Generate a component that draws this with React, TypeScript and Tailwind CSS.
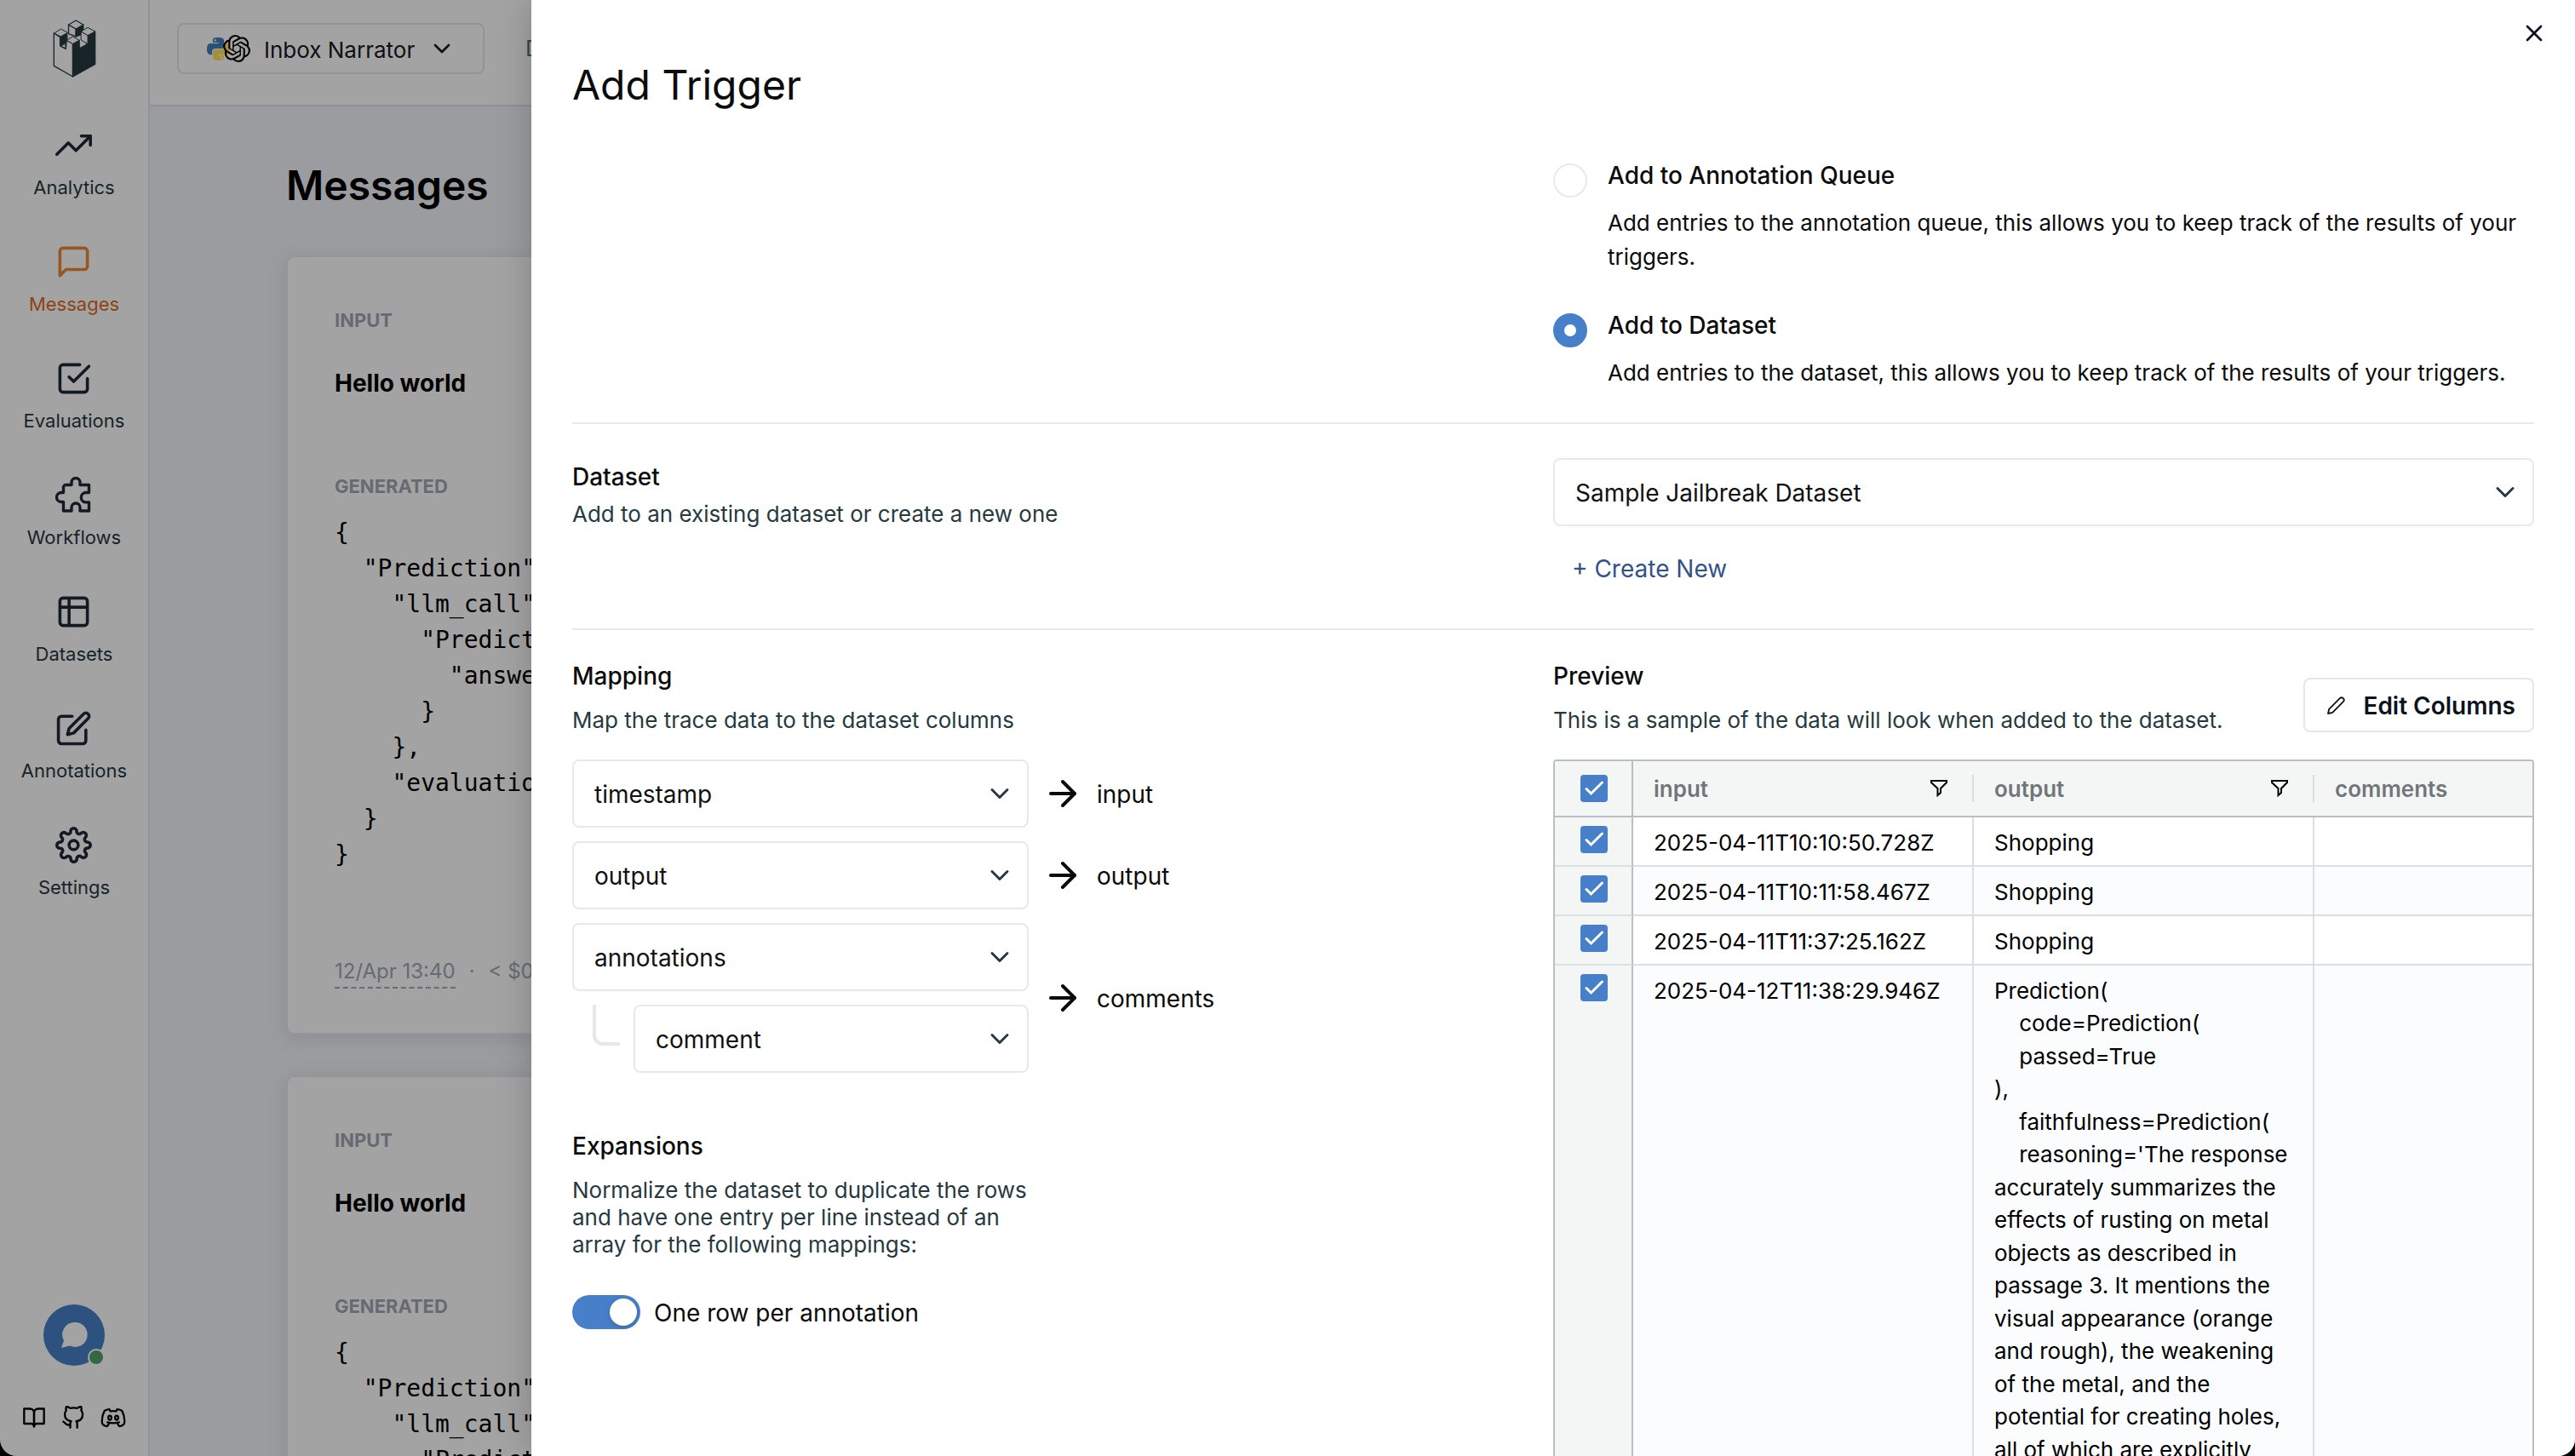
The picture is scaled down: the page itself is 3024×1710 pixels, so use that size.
import React from "react";
import {
  FiTrendingUp,
  FiMessageSquare,
  FiCheckSquare,
  FiEdit,
  FiSettings,
  FiBookOpen,
  FiGithub,
} from "react-icons/fi";
import { SiOpenai } from "react-icons/si";
import { ArrowRight, ChevronDown, X } from "lucide-react";

function CastleLogo() {
  return (
    <svg viewBox="64 38 154 205" className="h-[68px] w-[51px]" fill="none" stroke="#27393f" strokeWidth="4" strokeLinejoin="round" aria-hidden="true">
      <path d="M120 56L146 71V98L120 88Z" fill="#fff" />
      <path d="M146 71L172 56V88L146 98Z" fill="#27393f" />
      <path d="M146 41L172 56L146 71L120 56Z" fill="#fff" />
      <path d="M68 86V202L135 240V124L113 111L110 142L90 131V100Z" fill="#fff" />
      <path d="M135 124L158 111V138L184 124L188 118V94L214 80V196L135 240Z" fill="#27393f" />
      <path d="M164 80L188 94V124L164 110Z" fill="#fff" strokeWidth="3" />
      <path d="M188 66L214 80L188 94L164 80Z" fill="#fff" strokeWidth="3" />
      <path d="M161 113L183 125L161 137Z" fill="#fff" stroke="none" />
      <path d="M92 99L115 86V108L109 122L92 131Z" fill="#27393f" strokeWidth="3" />
      <path d="M93 71L117 84L92 98L69 86Z" fill="#fff" strokeWidth="3" />
      <path d="M109 123V140L93 131Z" fill="#fff" strokeWidth="3" />
      <path d="M135 98L158 111L135 124L113 111Z" fill="#fff" strokeWidth="3" />
    </svg>
  );
}

function PythonLogo() {
  return (
    <svg viewBox="0 0 24 24" className="size-[27px] shrink-0" aria-hidden="true">
      <path
        fill="#4280bd"
        d="M14.25.18l.9.2.73.26.59.3.45.32.34.34.25.34.16.33.1.3.04.26.02.2-.01.13V8.5l-.05.63-.13.55-.21.46-.26.38-.3.31-.33.25-.35.19-.35.14-.33.1-.3.07-.26.04-.21.02H8.77l-.69.05-.59.14-.5.22-.41.27-.33.32-.27.35-.2.36-.15.37-.1.35-.07.32-.04.27-.02.21v3.06H3.17l-.21-.03-.28-.07-.32-.12-.35-.18-.36-.26-.36-.36-.35-.46-.32-.59-.28-.73-.21-.88-.14-1.05-.05-1.23.06-1.22.16-1.04.24-.87.32-.71.36-.57.4-.44.42-.33.42-.24.4-.16.36-.1.32-.05.24-.01h.16l.06.01h8.16v-.83H6.18l-.01-2.75-.02-.37.05-.34.11-.31.17-.28.25-.26.31-.23.38-.2.44-.18.51-.15.58-.12.64-.1.71-.06.77-.04.84-.02 1.27.05zm-6.3 1.98l-.23.33-.08.41.08.41.23.34.33.22.41.09.41-.09.33-.22.23-.34.08-.41-.08-.41-.23-.33-.33-.22-.41-.09-.41.09z"
      />
      <path
        fill="#ffe05e"
        d="M21.04 6.11l.28.06.32.12.35.18.36.27.36.35.35.47.32.59.28.73.21.88.14 1.04.05 1.23-.06 1.23-.16 1.04-.24.86-.32.71-.36.57-.4.45-.42.33-.42.24-.4.16-.36.09-.32.05-.24.02-.16-.01h-8.22v.82h5.84l.01 2.76.02.36-.05.34-.11.31-.17.29-.25.25-.31.24-.38.2-.44.17-.51.15-.58.13-.64.09-.71.07-.77.04-.84.01-1.27-.04-1.07-.14-.9-.2-.73-.25-.59-.3-.45-.33-.34-.34-.25-.34-.16-.33-.1-.3-.04-.25-.02-.2.01-.13v-5.34l.05-.64.13-.54.21-.46.26-.38.3-.32.33-.24.35-.2.35-.14.33-.1.3-.06.26-.04.21-.02.13-.01h5.84l.69-.05.59-.14.5-.21.41-.28.33-.32.27-.35.2-.36.15-.36.1-.35.07-.32.04-.28.02-.21V6.07h2.09l.14.01zM14.57 20.36l-.23.33-.08.41.08.41.23.33.33.23.41.08.41-.08.33-.23.23-.33.08-.41-.08-.41-.23-.33-.33-.23-.41-.08-.41.08z"
      />
    </svg>
  );
}

function PuzzleIcon() {
  return (
    <svg viewBox="0 0 43 43" className="size-full" fill="none" stroke="currentColor" strokeWidth="3.4" strokeLinejoin="round" strokeLinecap="round" aria-hidden="true">
      <path d="M12.5 9.5H19V6.5a5 5 0 0 1 10 0V9.5H39.5V18.5H36a5.7 5.7 0 0 0 0 11.4H39.5V40H29V36a5 5 0 0 0-10 0V40H9.5V29.5H7a5.5 5.5 0 0 1 0-11H9.5V12.5a3 3 0 0 1 3-3Z" />
    </svg>
  );
}

function TableIcon() {
  return (
    <svg viewBox="0 0 24 24" className="size-full" fill="none" stroke="currentColor" strokeWidth="2" strokeLinejoin="round" aria-hidden="true">
      <rect x="3" y="3" width="18" height="18" rx="2" />
      <path d="M3 9h18M9 3v18" />
    </svg>
  );
}

function DiscordIcon() {
  return (
    <svg viewBox="0 0 24 24" className="size-[30px]" fill="none" stroke="currentColor" strokeWidth="1.8" strokeLinecap="round" strokeLinejoin="round" aria-hidden="true">
      <ellipse cx="8.8" cy="12" rx="1.5" ry="2" />
      <ellipse cx="15.2" cy="12" rx="1.5" ry="2" />
      <path d="M8 17c0 1-1.400 3-1.900 3C4.700 20 2.600 18.900 1.600 17.500c-.5-3.500.1-8 2.200-12C5.200 4.500 6.700 4.200 8.300 4l1 2c1.700-.3 3.700-.3 5.400 0l1-2c1.600.2 3.100.5 4.500 1.500 2.100 4 2.700 8.500 2.200 12-1 1.400-3.100 2.500-4.500 2.500-.5 0-1.900-2-1.900-3" />
      <path d="M6.500 16.300c3.500 1 7.500 1 11 0" />
    </svg>
  );
}

function PencilIcon() {
  return (
    <svg viewBox="0 0 24 24" className="size-[24px]" fill="none" stroke="currentColor" strokeWidth="1.8" strokeLinejoin="round" aria-hidden="true">
      <path d="M3 21l1.200-5.200L16.800 3.200a2.600 2.600 0 0 1 4 4L8.200 19.800Z" />
    </svg>
  );
}

function FilterIcon() {
  return (
    <svg viewBox="0 0 22 22" className="size-[22px]" fill="none" stroke="#000" strokeWidth="2" strokeLinejoin="miter" aria-hidden="true">
      <path d="M2 2H20V4L13 11V16L9.500 19V11L2 4Z" />
    </svg>
  );
}

const NAV = [
  { label: "Analytics", icon: <FiTrendingUp className="size-full" /> },
  { label: "Messages", icon: <FiMessageSquare className="size-full" />, active: true },
  { label: "Evaluations", icon: <FiCheckSquare className="size-full" /> },
  { label: "Workflows", icon: <PuzzleIcon /> },
  { label: "Datasets", icon: <TableIcon /> },
  { label: "Annotations", icon: <FiEdit className="size-full" /> },
  { label: "Settings", icon: <FiSettings className="size-full" /> },
];

function Sidebar() {
  return (
    <aside className="flex w-[176px] shrink-0 flex-col items-center border-r-2 border-[#e5e7eb] bg-white">
      <div className="mt-[23px]">
        <CastleLogo />
      </div>
      <nav className="mt-[58px] flex flex-col gap-[50px]">
        {NAV.map((n) => (
          <a
            key={n.label}
            href="#"
            className={
              n.active
                ? "flex flex-col items-center gap-3 text-[#ed8936]"
                : "flex flex-col items-center gap-3 text-[#1f2937]"
            }
          >
            <span className="size-[43px]">{n.icon}</span>
            <span className={n.active ? "text-[22px] leading-8 text-[#dd6b20]" : "text-[22px] leading-8 text-[#27393f]"}>
              {n.label}
            </span>
          </a>
        ))}
      </nav>
      <button type="button" aria-label="Open chat" className="relative mt-auto size-[72px] rounded-full bg-[#4780c9]">
        <svg viewBox="0 0 72 72" className="size-full" fill="#fff" aria-hidden="true">
          <path d="M37 21a14.500 14.500 0 1 1-6 27.600L21 51l3-8.500A14.500 14.500 0 0 1 37 21Z" />
        </svg>
        <span className="absolute right-0 bottom-0 size-5 rounded-full border-2 border-white bg-[#55a26c]" />
      </button>
      <div className="mt-[46px] mb-[30px] flex items-center gap-[18px] text-black">
        <a href="#" aria-label="Documentation"><FiBookOpen className="size-7" /></a>
        <a href="#" aria-label="GitHub"><FiGithub className="size-7" /></a>
        <a href="#" aria-label="Discord"><DiscordIcon /></a>
      </div>
    </aside>
  );
}

const CODE = `{
  "Prediction": {
    "llm_call": {
      "Prediction"
        "answer"
      }
    },
    "evaluation"
  }
}`;

function MessageCard() {
  return (
    <article className="rounded-[10px] border-2 border-[#e9ebf0] bg-white px-[55px] pt-[58px] pb-[52px] shadow-[0_4px_24px_rgba(0,0,0,0.1)]">
      <h2 className="text-[22px] leading-8 font-bold text-[#a0a8b5]">INPUT</h2>
      <p className="mt-[38px] text-[28px] leading-10 font-bold text-black">Hello world</p>
      <h2 className="mt-[85px] text-[22px] leading-8 font-bold text-[#a0a8b5]">GENERATED</h2>
      <pre className="mt-[18px] overflow-hidden font-['DejaVu_Sans_Mono',monospace] text-[28px] leading-[42px] text-black">{CODE}</pre>
      <p className="mt-[98px] flex items-start gap-4 text-[24px] leading-9 whitespace-nowrap text-[#a0a8b5]">
        <span className="border-b-2 border-dashed border-[#a0a8b5]">12/Apr 13:40</span>
        <span>·</span>
        <span>&lt; $0</span>
      </p>
    </article>
  );
}

function MessagesPage() {
  return (
    <div className="flex min-w-0 flex-1 flex-col">
      <header className="flex items-start border-b-2 border-[#dfe2ea] bg-white px-8 pt-[27px] pb-9">
        <button type="button" className="flex h-[60px] w-[361px] items-center rounded-[8px] border-2 border-[#e5e7eb] pl-[33px] text-[26px] whitespace-nowrap text-[#171923]">
          <PythonLogo />
          <SiOpenai className="-ml-2 size-8 shrink-0 text-black" />
          <span className="ml-4 pt-0.5">Inbox Narrator</span>
          <ChevronDown className="ml-4 size-8" strokeWidth={2} />
        </button>
        <span className="mt-2.5 ml-12 text-[26px] leading-10 text-[#5d7078]">D</span>
      </header>
      <main className="flex-1 overflow-hidden bg-[#f2f4f9] px-[160px] pt-[61px]">
        <h1 className="text-[48px] leading-[64px] font-semibold text-black">Messages</h1>
        <div className="mt-[50px] flex flex-col gap-12">
          <MessageCard />
          <MessageCard />
        </div>
      </main>
    </div>
  );
}

function Select({ label, options, className }: { label: string; options: string[]; className: string }) {
  return (
    <div className={className}>
      <select
        aria-label={label}
        className="col-start-1 row-start-1 h-20 w-full appearance-none rounded-[8px] border-2 border-[#e6e9ef] bg-white pt-0.5 pr-16 pl-6 text-[28px] text-[#111]"
      >
        {options.map((o) => (
          <option key={o}>{o}</option>
        ))}
      </select>
      <ChevronDown className="pointer-events-none col-start-1 row-start-1 mr-4 size-9 self-center justify-self-end text-[#27393f]" />
    </div>
  );
}

function RadioOption({ id, title, text, checked }: { id: string; title: string; text: string; checked?: boolean }) {
  return (
    <div className="flex items-start gap-6">
      <input
        type="radio"
        name="action"
        id={id}
        defaultChecked={checked}
        className="mt-1.5 size-10 shrink-0 appearance-none rounded-full border-2 border-[#e6e9ef] bg-white checked:border-[13px] checked:border-[#4780c9]"
      />
      <label htmlFor={id} className="block">
        <span className="block text-[28px] leading-10 font-medium">{title}</span>
        <span className="mt-4 block text-[26px] leading-10">{text}</span>
      </label>
    </div>
  );
}

function MappingRow({ target, children }: { target: string; children: React.ReactNode }) {
  return (
    <div className="flex items-center gap-4">
      <div className="flex w-[536px] flex-col gap-4">{children}</div>
      <ArrowRight className="size-12" strokeWidth={2} />
      <span className="pt-0.5 text-[28px] leading-10">{target}</span>
    </div>
  );
}

function GridCheck({ label }: { label: string }) {
  return (
    <span className="inline-grid size-8 align-top">
      <input type="checkbox" defaultChecked aria-label={label} className="col-start-1 row-start-1 size-8 appearance-none rounded-[4px] bg-[#4780c9]" />
      <svg viewBox="0 0 32 32" className="pointer-events-none col-start-1 row-start-1 size-8" fill="none" stroke="#fff" strokeWidth="3" strokeLinecap="round" aria-hidden="true">
        <path d="M7 16.500L12.500 22L25.500 9" />
      </svg>
    </span>
  );
}

const LONG_OUTPUT = `Prediction(
    code=Prediction(
    passed=True
),
    faithfulness=Prediction(
    reasoning='The response accurately summarizes the effects of rusting on metal objects as described in passage 3. It mentions the visual appearance (orange and rough), the weakening of the metal, and the potential for creating holes, all of which are explicitly`;

const ROWS = [
  ["2025-04-11T10:10:50.728Z", "Shopping"],
  ["2025-04-11T10:11:58.467Z", "Shopping"],
  ["2025-04-11T11:37:25.162Z", "Shopping"],
  ["2025-04-12T11:38:29.946Z", LONG_OUTPUT],
];

function HeaderCell({ name, filter }: { name: string; filter?: boolean }) {
  return (
    <th scope="col" className="border-b-2 border-[#babfc3] p-0 text-left text-[26px] font-semibold text-[#70767a]">
      <div className={filter ? "flex h-8 items-center justify-between border-r-2 border-[#d9dcde] pr-7 pl-6" : "flex h-8 items-center pl-6"}>
        <span>{name}</span>
        {filter && (
          <button type="button" aria-label={"Filter " + name}>
            <FilterIcon />
          </button>
        )}
      </div>
    </th>
  );
}

function PreviewTable() {
  return (
    <div className="mt-[26px] overflow-hidden rounded-t-[4px] border-2 border-b-0 border-[#babfc3]">
      <table className="w-full table-fixed border-separate border-spacing-0">
        <colgroup>
          <col className="w-[92px]" />
          <col className="w-[400px]" />
          <col className="w-[400px]" />
          <col />
        </colgroup>
        <thead className="bg-[#f4f6f6]">
          <tr className="h-[66px]">
            <th scope="col" className="border-r-2 border-b-2 border-[#babfc3] p-0 pl-0.5">
              <GridCheck label="Select all rows" />
            </th>
            <HeaderCell name="input" filter />
            <HeaderCell name="output" filter />
            <HeaderCell name="comments" />
          </tr>
        </thead>
        <tbody className="text-[26px] leading-[1.48] text-black">
          {ROWS.map(([input, output], i) => (
            <tr key={input} className="h-[58px] align-top even:bg-[#fbfcfe]">
              <td className="border-r-2 border-b-2 border-r-[#babfc3] border-b-[#dcdfe1] bg-[#f4f6f6] p-0 pt-2.5 pl-0.5 text-center leading-8">
                <GridCheck label={"Select row " + (i + 1)} />
              </td>
              <td className="border-r-2 border-b-2 border-[#dcdfe1] px-6 pt-[11px] whitespace-nowrap">{input}</td>
              <td className="border-r-2 border-b-2 border-[#dcdfe1] px-6 pt-[11px] whitespace-pre-wrap">{output}</td>
              <td className="border-b-2 border-[#dcdfe1]" />
            </tr>
          ))}
        </tbody>
      </table>
    </div>
  );
}

function TriggerDrawer() {
  return (
    <section role="dialog" aria-labelledby="drawer-title" className="relative min-w-0 flex-1 overflow-hidden bg-white px-12 pt-[68px] text-[#0b0b0b] shadow-[0_0_40px_rgba(0,0,0,0.2)]">
      <button type="button" aria-label="Close" className="absolute top-[23px] right-8 text-[#0b1220]">
        <X className="size-8" strokeWidth={2} />
      </button>
      <h1 id="drawer-title" className="text-[48px] leading-[64px]">Add Trigger</h1>

      <div className="mt-[54px] grid grid-cols-2 pb-[38px]">
        <fieldset className="col-start-2 flex flex-col gap-10">
          <RadioOption
            id="annotation-queue"
            title="Add to Annotation Queue"
            text="Add entries to the annotation queue, this allows you to keep track of the results of your triggers."
          />
          <RadioOption
            id="dataset"
            title="Add to Dataset"
            text="Add entries to the dataset, this allows you to keep track of the results of your triggers."
            checked
          />
        </fieldset>
      </div>

      <div className="grid grid-cols-2 border-t-2 border-[#e6e9ef] pt-10 pb-[50px]">
        <div className="pt-0.5">
          <h2 className="text-[28px] leading-10 font-medium">Dataset</h2>
          <p className="mt-1 text-[26px] leading-10 text-[#27393f]">Add to an existing dataset or create a new one</p>
        </div>
        <div>
          <Select label="Dataset" options={["Sample Jailbreak Dataset"]} className="grid" />
          <button type="button" className="mt-[30px] block pl-[22px] text-[28px] leading-10 text-[#34518a]">+ Create New</button>
        </div>
      </div>

      <div className="grid grid-cols-2 border-t-2 border-[#e6e9ef] pt-[34px]">
        <div>
          <h2 className="text-[28px] leading-10 font-medium">Mapping</h2>
          <p className="mt-3 text-[26px] leading-10 text-[#27393f]">Map the trace data to the dataset columns</p>
          <div className="mt-[26px] flex flex-col gap-4">
            <MappingRow target="input">
              <Select label="Source for input" options={["timestamp"]} className="grid" />
            </MappingRow>
            <MappingRow target="output">
              <Select label="Source for output" options={["output"]} className="grid" />
            </MappingRow>
            <MappingRow target="comments">
              <Select label="Source for comments" options={["annotations"]} className="grid" />
              <div className="flex items-start pl-6">
                <span className="h-12 w-8 rounded-bl-[12px] border-b-4 border-l-4 border-[#e5e7eb]" />
                <Select label="Annotation field" options={["comment"]} className="ml-4 grid flex-1" />
              </div>
            </MappingRow>
          </div>
          <h2 className="mt-[66px] text-[28px] leading-10 font-medium">Expansions</h2>
          <p className="mt-4 w-[560px] text-[26px] leading-8 text-[#27393f]">
            Normalize the dataset to duplicate the rows and have one entry per line instead of an array for the following mappings:
          </p>
          <label className="mt-[42px] flex items-center gap-4 text-[28px] leading-10">
            <input
              type="checkbox"
              role="switch"
              defaultChecked
              className="h-10 w-20 appearance-none rounded-full bg-[#cbd5e0] p-1 before:block before:size-8 before:rounded-full before:bg-white before:shadow-[0_2px_6px_rgba(0,0,0,0.2)] checked:bg-[#4780c9] checked:before:ml-10"
            />
            <span className="pt-0.5">One row per annotation</span>
          </label>
        </div>
        <div className="min-w-0">
          <div className="flex items-end justify-between">
            <div>
              <h2 className="text-[28px] leading-10 font-medium">Preview</h2>
              <p className="mt-3 text-[26px] leading-10 text-[#27393f]">This is a sample of the data will look when added to the dataset.</p>
            </div>
            <button type="button" className="mb-1.5 flex h-16 items-center gap-5 rounded-[8px] border-2 border-[#e6e6ec] pt-0.5 pr-5 pl-6 text-[28px] font-semibold text-[#0b1220]">
              <PencilIcon />
              Edit Columns
            </button>
          </div>
          <PreviewTable />
        </div>
      </div>
    </section>
  );
}

export default function App() {
  return (
    <div className="h-screen bg-black font-['Inter',sans-serif]">
      <div className="relative flex h-full overflow-hidden rounded-b-[20px]">
        <Sidebar />
        <MessagesPage />
        <div className="absolute inset-0 flex bg-black/36 pl-[624px]">
          <TriggerDrawer />
        </div>
      </div>
    </div>
  );
}
